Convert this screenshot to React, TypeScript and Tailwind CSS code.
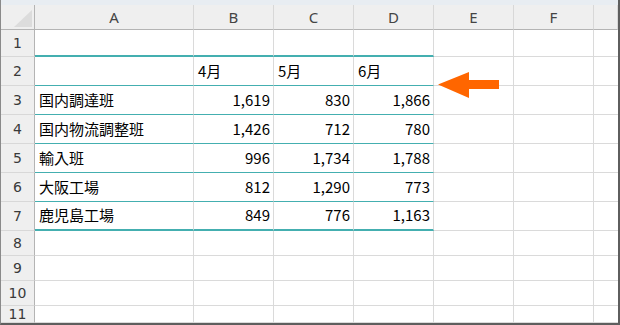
import React from "react";

const cols = ["A", "B", "C", "D", "E", "F", ""];
const data: (string | null)[][] = [
  [null, null, null, null],
  [null, "4月", "5月", "6月"],
  ["国内調達班", "1,619", "830", "1,866"],
  ["国内物流調整班", "1,426", "712", "780"],
  ["輸入班", "996", "1,734", "1,788"],
  ["大阪工場", "812", "1,290", "773"],
  ["鹿児島工場", "849", "776", "1,163"],
  [null, null, null, null],
  [null, null, null, null],
  [null, null, null, null],
  [null, null, null, null],
];

const rowHeights = ["h-[27px]", "h-[29px]", "h-[29px]", "h-[29px]", "h-[29px]", "h-[29px]", "h-[29px]", "h-[25px]", "h-[25px]", "h-[25px]", "h-[17px]"];

export default function App() {
  return (
    <div className="relative w-[620px] h-[325px] overflow-hidden bg-white border-l border-l-[#8a8a8a] border-r-2 border-r-[#5e5e5e] border-b-2 border-b-[#5e5e5e]">
      <div className="h-[5px] bg-[#e8edf2]" />
      <div
        className="grid grid-cols-[34px_159px_80px_80px_80px_80px_80px_1fr]"
        style={{ fontFamily: '"Noto Sans CJK JP", "Noto Sans", sans-serif' }}
      >
        {/* header row */}
        <div className="relative h-[25px] bg-[#efefef] border-r border-r-[#b4b4b4] border-b border-b-[#b4b4b4]">
          <svg className="absolute left-[13px] top-[5px]" width="18" height="17" viewBox="0 0 18 17">
            <polygon points="18,0 18,17 0,17" fill="#dcdcdc" />
          </svg>
        </div>
        {cols.map((c, i) => (
          <div
            key={"h" + i}
            className="h-[25px] bg-[#efefef] border-r border-r-[#d8d8d8] border-b border-b-[#b4b4b4] flex items-center justify-center text-[15px] text-[#444]"
            style={{ fontFamily: '"Noto Sans", "DejaVu Sans", sans-serif' }}
          >
            {c}
          </div>
        ))}
        {data.map((row, r) => {
          const h = rowHeights[r];
          const rowNum = r + 1;
          const cells = [];
          cells.push(
            <div
              key={"rh" + r}
              className={`${h} bg-[#efefef] border-r border-r-[#b4b4b4] border-b border-b-[#d8d8d8] flex items-center justify-center text-[14px] text-[#3a3a3a]`}
              style={{ fontFamily: '"DejaVu Sans", sans-serif' }}
            >
              {rowNum}
            </div>
          );
          for (let c = 0; c < 7; c++) {
            const inTable = c < 4;
            let bb = "border-b border-b-[#dadada]";
            if (inTable) {
              if (r === 0 || r === 6) bb = "border-b-2 border-b-[#44afb0]";
              else if (r >= 1 && r <= 5) bb = "border-b border-b-[#44afb0]";
            }
            const v = inTable ? row[c] : null;
            const isNum = inTable && c > 0 && r >= 2 && r <= 6;
            cells.push(
              <div
                key={"c" + r + "-" + c}
                className={`${h} ${bb} border-r border-r-[#dadada] flex items-center text-[15px] text-black whitespace-nowrap ${
                  isNum ? "justify-end pr-[3px]" : "justify-start pl-[4px]"
                } ${c === 6 ? "border-r-0" : ""}`}
              >
                {v}
              </div>
            );
          }
          return <React.Fragment key={"r" + r}>{cells}</React.Fragment>;
        })}
      </div>
      <svg className="absolute left-[437px] top-[72px]" width="62" height="27" viewBox="0 0 62 27">
        <polygon points="0,12.5 31,0 31,8 61,8 61,17 31,17 31,26" fill="#ff6600" />
      </svg>
    </div>
  );
}
